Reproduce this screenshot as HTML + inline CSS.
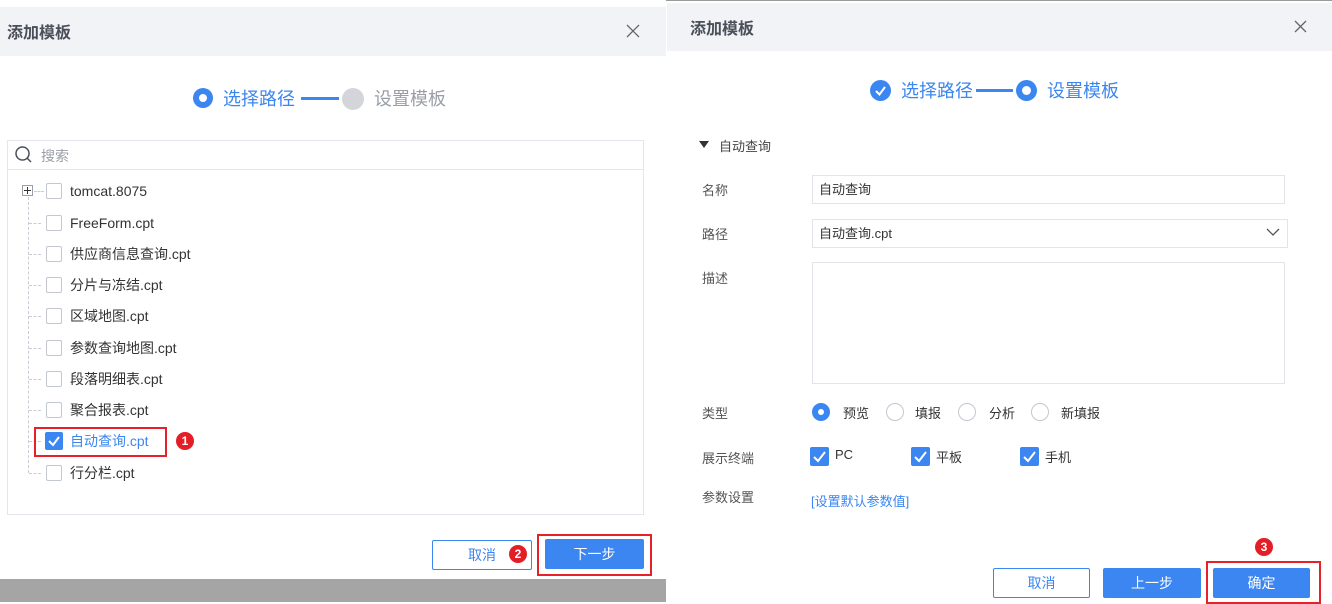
<!DOCTYPE html>
<html><head><meta charset="utf-8"><style>
*{margin:0;padding:0;box-sizing:border-box}
body{width:1332px;height:602px;position:relative;overflow:hidden;background:#fff;font-family:"Liberation Sans","Noto Sans CJK SC",sans-serif;font-size:14px;color:#333}
.a{position:absolute}
.hdr{background:#f1f3f6}
.title{font-size:16px;font-weight:bold;color:#4a4f5a}
.cb{position:absolute;width:16px;height:16px;border:1px solid #c3c7cf;border-radius:2px;background:#fff}
.cbon{position:absolute;width:18px;height:18px;border-radius:2px;background:#3b86f0}
.cbon svg,.cb svg{position:absolute;left:0;top:0}
.t{position:absolute;font-size:14px;color:#333;line-height:18px;white-space:nowrap}
.badge{position:absolute;width:18px;height:18px;border-radius:50%;background:#e41e26;color:#fff;font-size:12px;font-weight:bold;text-align:center;line-height:18px}
.red{position:absolute;border:2px solid #e6212a}
.btn{position:absolute;border-radius:2px;font-size:14px;text-align:center}
.blue{background:#3b86f0;color:#fff}
.ghost{border:1px solid #3b86f0;color:#3b86f0;background:#fff}
.lbl{position:absolute;font-size:13px;color:#555;white-space:nowrap}
.inp{position:absolute;border:1px solid #e1e4e9;background:#fff;font-size:13px;color:#333;padding-left:6px}
.dash{position:absolute;border-left:1px dashed #c9ccd2}
.hd{position:absolute;border-top:1px dashed #c9ccd2;width:12px}
.radio{position:absolute;width:18px;height:18px;border-radius:50%;border:1px solid #c3c7cf;background:#fff}
.radon{position:absolute;width:18px;height:18px;border-radius:50%;background:#3b86f0}
.radon::after{content:"";position:absolute;left:6px;top:6px;width:6px;height:6px;border-radius:50%;background:#fff}
</style></head><body>
<!-- LEFT -->
<div class="a hdr" style="left:0;top:7px;width:666px;height:49px"></div>
<div class="a title" style="left:7px;top:19px">添加模板</div>
<svg class="a" style="left:626px;top:24px" width="14" height="14"><path d="M1 1L13 13M13 1L1 13" stroke="#666" stroke-width="1.3"/></svg>
<div class="a" style="left:193px;top:88px;width:20px;height:20px;border-radius:50%;background:#3b86f0"></div>
<div class="a" style="left:199px;top:94px;width:8px;height:8px;border-radius:50%;background:#fff"></div>
<div class="a" style="left:223px;top:85px;font-size:18px;color:#3b86f0">选择路径</div>
<div class="a" style="left:301px;top:97px;width:38px;height:3px;background:#3b86f0"></div>
<div class="a" style="left:342px;top:88px;width:22px;height:22px;border-radius:50%;background:#d3d5da"></div>
<div class="a" style="left:374px;top:85px;font-size:18px;color:#9a9ea6">设置模板</div>
<div class="a" style="left:7px;top:140px;width:637px;height:375px;border:1px solid #e3e6ea"></div>
<div class="a" style="left:7px;top:169px;width:637px;height:1px;background:#e3e6ea"></div>
<svg class="a" style="left:14px;top:145px" width="20" height="20"><circle cx="8.5" cy="8.5" r="6.5" fill="none" stroke="#4a4f5a" stroke-width="1.5"/><path d="M13 13L17 17" stroke="#4a4f5a" stroke-width="1.5"/></svg>
<div class="a" style="left:41px;top:146px;font-size:14px;color:#9a9ea6">搜索</div>
<div class="a" style="left:22px;top:185px;width:11px;height:11px;border:1px solid #9aa0a8;background:#fff"></div>
<div class="a" style="left:24px;top:190px;width:7px;height:1px;background:#333"></div>
<div class="a" style="left:27px;top:187px;width:1px;height:7px;background:#333"></div>
<div class="dash" style="left:28px;top:197px;height:276px"></div>
<div class="hd" style="left:34px;top:191px;width:10px"></div>
<div class="hd" style="left:29px;top:223px"></div>
<div class="hd" style="left:29px;top:254px"></div>
<div class="hd" style="left:29px;top:285px"></div>
<div class="hd" style="left:29px;top:316px"></div>
<div class="hd" style="left:29px;top:348px"></div>
<div class="hd" style="left:29px;top:379px"></div>
<div class="hd" style="left:29px;top:410px"></div>
<div class="hd" style="left:29px;top:441px"></div>
<div class="hd" style="left:29px;top:473px"></div>
<div class="cb" style="left:46px;top:183px"></div><div class="t" style="left:70px;top:182px">tomcat.8075</div>
<div class="cb" style="left:46px;top:215px"></div><div class="t" style="left:70px;top:214px">FreeForm.cpt</div>
<div class="cb" style="left:46px;top:246px"></div><div class="t" style="left:70px;top:245px">供应商信息查询.cpt</div>
<div class="cb" style="left:46px;top:277px"></div><div class="t" style="left:70px;top:276px">分片与冻结.cpt</div>
<div class="cb" style="left:46px;top:308px"></div><div class="t" style="left:70px;top:307px">区域地图.cpt</div>
<div class="cb" style="left:46px;top:340px"></div><div class="t" style="left:70px;top:339px">参数查询地图.cpt</div>
<div class="cb" style="left:46px;top:371px"></div><div class="t" style="left:70px;top:370px">段落明细表.cpt</div>
<div class="cb" style="left:46px;top:402px"></div><div class="t" style="left:70px;top:401px">聚合报表.cpt</div>
<div class="cbon" style="left:45px;top:432px"><svg width="18" height="18"><path d="M4 9L8 13L14 5" fill="none" stroke="#fff" stroke-width="2"/></svg></div><div class="t" style="left:70px;top:432px;color:#3b86f0">自动查询.cpt</div>
<div class="cb" style="left:46px;top:465px"></div><div class="t" style="left:70px;top:464px">行分栏.cpt</div>
<div class="red" style="left:34px;top:427px;width:133px;height:30px"></div>
<div class="badge" style="left:176px;top:432px">1</div>
<div class="btn ghost" style="left:432px;top:540px;width:100px;height:30px;line-height:28px">取消</div>
<div class="badge" style="left:509px;top:545px">2</div>
<div class="btn blue" style="left:545px;top:539px;width:99px;height:30px;line-height:30px">下一步</div>
<div class="red" style="left:537px;top:534px;width:115px;height:42px"></div>
<div class="a" style="left:0;top:579px;width:666px;height:23px;background:#a5a5a5"></div>
<!-- RIGHT -->
<div class="a" style="left:666px;top:0;width:666px;height:1px;background:#9a9a9a"></div>
<div class="a hdr" style="left:667px;top:3px;width:665px;height:48px"></div>
<div class="a title" style="left:690px;top:15px">添加模板</div>
<svg class="a" style="left:1294px;top:20px" width="13" height="13"><path d="M1 1L12 12M12 1L1 12" stroke="#666" stroke-width="1.3"/></svg>
<div class="a" style="left:870px;top:80px;width:21px;height:21px;border-radius:50%;background:#3b86f0"></div>
<svg class="a" style="left:870px;top:80px" width="21" height="21"><path d="M6 11L9.5 14.5L15 7" fill="none" stroke="#fff" stroke-width="2"/></svg>
<div class="a" style="left:901px;top:77px;font-size:18px;color:#3b86f0">选择路径</div>
<div class="a" style="left:976px;top:89px;width:37px;height:3px;background:#3b86f0"></div>
<div class="a" style="left:1016px;top:80px;width:21px;height:21px;border-radius:50%;background:#3b86f0"></div>
<div class="a" style="left:1022px;top:86px;width:9px;height:9px;border-radius:50%;background:#fff"></div>
<div class="a" style="left:1047px;top:77px;font-size:18px;color:#3b86f0">设置模板</div>
<svg class="a" style="left:699px;top:141px" width="10" height="8"><path d="M0 0H10L5 7Z" fill="#333"/></svg>
<div class="lbl" style="left:719px;top:136px;color:#444">自动查询</div>
<div class="lbl" style="left:702px;top:180px">名称</div>
<div class="inp" style="left:812px;top:175px;width:473px;height:29px;line-height:27px">自动查询</div>
<div class="lbl" style="left:702px;top:224px">路径</div>
<div class="inp" style="left:812px;top:219px;width:476px;height:29px;line-height:27px">自动查询.cpt</div>
<svg class="a" style="left:1266px;top:228px" width="14" height="9"><path d="M1 1L7 7L13 1" fill="none" stroke="#555" stroke-width="1.3"/></svg>
<div class="lbl" style="left:702px;top:268px">描述</div>
<div class="inp" style="left:812px;top:262px;width:473px;height:122px"></div>
<div class="lbl" style="left:702px;top:403px">类型</div>
<div class="radon" style="left:812px;top:403px"></div><div class="lbl" style="left:843px;top:403px;color:#333">预览</div>
<div class="radio" style="left:886px;top:403px"></div><div class="lbl" style="left:915px;top:403px;color:#333">填报</div>
<div class="radio" style="left:958px;top:403px"></div><div class="lbl" style="left:989px;top:403px;color:#333">分析</div>
<div class="radio" style="left:1031px;top:403px"></div><div class="lbl" style="left:1061px;top:403px;color:#333">新填报</div>
<div class="lbl" style="left:702px;top:448px">展示终端</div>
<div class="cbon" style="left:810px;top:447px;width:19px;height:19px"><svg width="19" height="19"><path d="M4 10L8 14L15 5" fill="none" stroke="#fff" stroke-width="2"/></svg></div><div class="lbl" style="left:835px;top:447px;color:#333">PC</div>
<div class="cbon" style="left:911px;top:447px;width:19px;height:19px"><svg width="19" height="19"><path d="M4 10L8 14L15 5" fill="none" stroke="#fff" stroke-width="2"/></svg></div><div class="lbl" style="left:936px;top:447px;color:#333">平板</div>
<div class="cbon" style="left:1020px;top:447px;width:19px;height:19px"><svg width="19" height="19"><path d="M4 10L8 14L15 5" fill="none" stroke="#fff" stroke-width="2"/></svg></div><div class="lbl" style="left:1045px;top:447px;color:#333">手机</div>
<div class="lbl" style="left:702px;top:487px">参数设置</div>
<div class="lbl" style="left:811px;top:491px;color:#3b86f0">[设置默认参数值]</div>
<div class="badge" style="left:1255px;top:538px">3</div>
<div class="btn ghost" style="left:993px;top:568px;width:97px;height:30px;line-height:28px">取消</div>
<div class="btn blue" style="left:1103px;top:568px;width:98px;height:30px;line-height:30px">上一步</div>
<div class="btn blue" style="left:1213px;top:568px;width:97px;height:30px;line-height:30px">确定</div>
<div class="red" style="left:1206px;top:561px;width:115px;height:43px"></div>
</body></html>
